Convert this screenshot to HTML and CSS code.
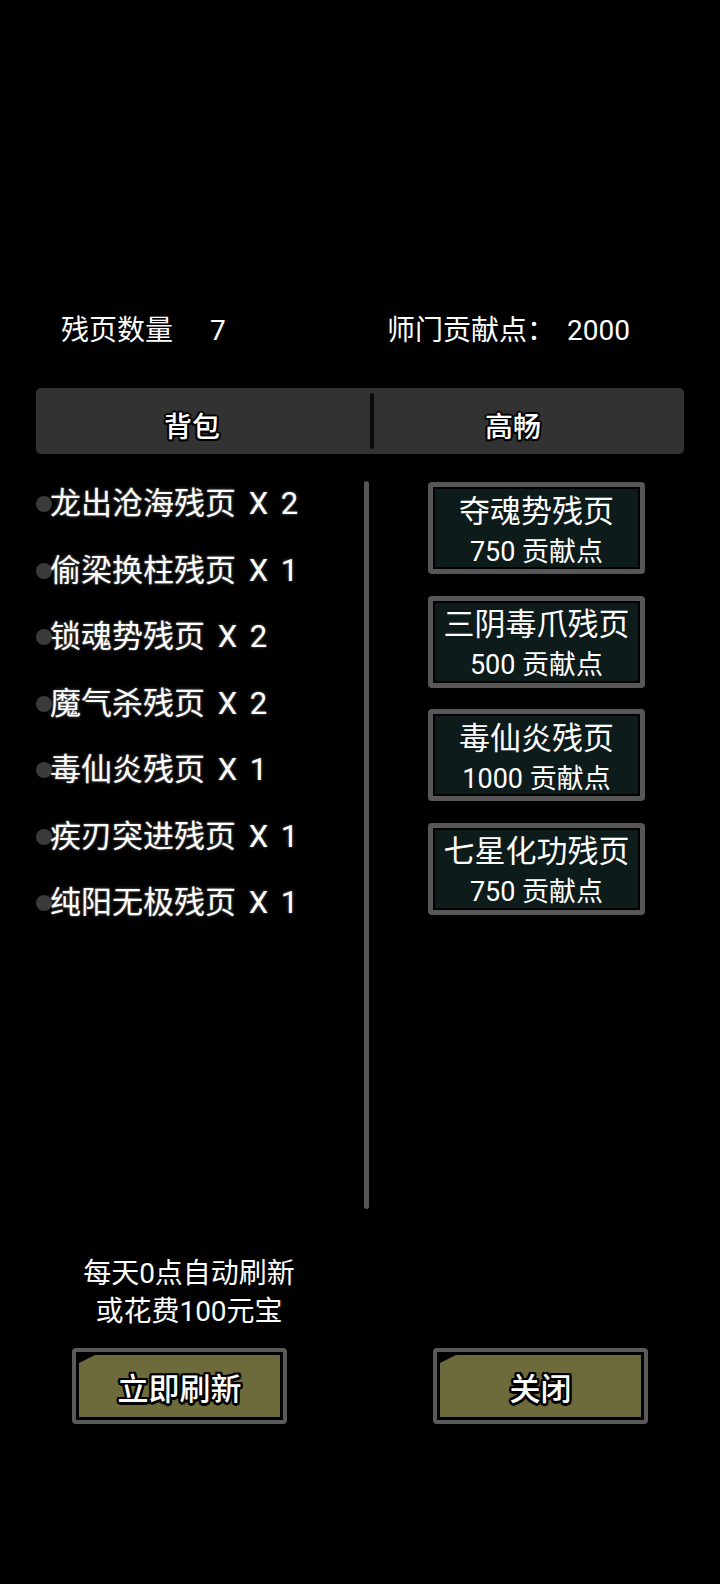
FILE: index.html
```html
<!DOCTYPE html>
<html lang="zh-CN">
<head>
<meta charset="utf-8">
<title>残页</title>
<link rel="stylesheet" href="styles.css">
</head>
<body>
<div class="screen">
  <div class="header">
    <div class="stat stat-left"><span>残页数量</span><span class="num">7</span></div>
    <div class="stat stat-right"><span>师门贡献点：</span><span class="num">2000</span></div>
  </div>

  <div class="tabs">
    <div class="tab tab-first">背包</div>
    <div class="tab-divider"></div>
    <div class="tab tab-second">高畅</div>
  </div>

  <div class="main">
    <ul class="bag">
      <li class="bag-row"><span class="knob"></span><span class="bag-text">龙出沧海残页 X 2</span></li>
      <li class="bag-row"><span class="knob"></span><span class="bag-text">偷梁换柱残页 X 1</span></li>
      <li class="bag-row"><span class="knob"></span><span class="bag-text">锁魂势残页 X 2</span></li>
      <li class="bag-row"><span class="knob"></span><span class="bag-text">魔气杀残页 X 2</span></li>
      <li class="bag-row"><span class="knob"></span><span class="bag-text">毒仙炎残页 X 1</span></li>
      <li class="bag-row"><span class="knob"></span><span class="bag-text">疾刃突进残页 X 1</span></li>
      <li class="bag-row"><span class="knob"></span><span class="bag-text">纯阳无极残页 X 1</span></li>
    </ul>
    <div class="scrollbar"></div>
    <div class="shop">
      <div class="card"><div class="card-title">夺魂势残页</div><div class="card-price">750 贡献点</div></div>
      <div class="card"><div class="card-title">三阴毒爪残页</div><div class="card-price">500 贡献点</div></div>
      <div class="card"><div class="card-title">毒仙炎残页</div><div class="card-price">1000 贡献点</div></div>
      <div class="card"><div class="card-title">七星化功残页</div><div class="card-price">750 贡献点</div></div>
    </div>
  </div>

  <div class="notice">
    <div>每天0点自动刷新</div>
    <div>或花费100元宝</div>
  </div>

  <div class="buttons">
    <div class="btn"><div class="btn-face">立即刷新</div></div>
    <div class="btn"><div class="btn-face">关闭</div></div>
  </div>
</div>
</body>
</html>
```

FILE: styles.css
```css
html, body {
  margin: 0;
  padding: 0;
  background: #000;
}

body {
  width: 720px;
  height: 1584px;
  overflow: hidden;
  color: #fff;
  font-family: Roboto, "Noto Sans CJK SC", sans-serif;
}

.screen {
  padding-top: 311px;
}

/* header stats */
.header {
  display: flex;
  padding-left: 61px;
  font-size: 28px;
  line-height: 40px;
}

.stat {
  display: flex;
}

.stat-left {
  width: 326px;
  gap: 37px;
}

.stat-right {
  gap: 12px;
}

/* tab bar */
.tabs {
  margin: 37px 0 0 36px;
  width: 648px;
  height: 66px;
  background: #323232;
  border-radius: 5px;
  display: flex;
  align-items: center;
}

.tab {
  box-sizing: border-box;
  text-align: center;
  font-size: 28px;
  font-weight: 500;
  line-height: 52px;
  padding-top: 14px;
  height: 66px;
  text-shadow:
    2px 0 #000, -2px 0 #000, 0 2px #000, 0 -2px #000,
    1.5px 1.5px #000, -1.5px -1.5px #000, 1.5px -1.5px #000, -1.5px 1.5px #000;
}

.tab-first {
  flex: 0 0 334px;
  padding-right: 22px;
}

.tab-second {
  flex: 1 1 0;
  padding-right: 32px;
}

.tab-divider {
  flex: none;
  width: 4px;
  height: 56px;
  background: #0a0a0a;
  border-radius: 2px;
}

/* main area */
.main {
  display: flex;
  align-items: flex-start;
  padding-top: 17px;
}

.bag {
  list-style: none;
  margin: 0;
  padding: 0;
  width: 364px;
  display: flex;
  flex-direction: column;
}

.bag-row {
  display: flex;
  align-items: center;
  height: 66.5px;
}

.knob {
  width: 16px;
  height: 16px;
  border-radius: 50%;
  background: #3a3a3a;
  margin-left: 36px;
  margin-right: -2px;
  flex: none;
}

.bag-text {
  font-size: 31px;
  line-height: 66.5px;
  white-space: nowrap;
  word-spacing: 5px;
  text-shadow: 0 0 2px rgba(200, 200, 200, 0.55), 0 0 5px rgba(140, 140, 140, 0.35);
}

.scrollbar {
  width: 5px;
  height: 728px;
  margin-top: 10px;
  background: #555;
  border-radius: 3px;
  flex: none;
}

.shop {
  margin: 11px 0 0 59px;
  display: flex;
  flex-direction: column;
  gap: 21.5px;
}

.card {
  box-sizing: border-box;
  width: 217px;
  height: 92px;
  border: 5px solid #575757;
  border-radius: 4px;
  background: #0e1b1b;
  box-shadow: inset 0 0 0 2px #000;
  display: flex;
  flex-direction: column;
  align-items: center;
}

.card-title {
  margin-top: 6.5px;
  font-size: 31px;
  line-height: 36px;
  white-space: nowrap;
}

.card-price {
  margin-top: 6px;
  font-size: 27px;
  line-height: 32px;
  white-space: nowrap;
}

/* notice */
.notice {
  margin-top: 46px;
  width: 378px;
  text-align: center;
  font-size: 28px;
  line-height: 38px;
}

/* buttons */
.buttons {
  display: flex;
  gap: 146px;
  margin-top: 17px;
  padding-left: 72px;
}

.btn {
  box-sizing: border-box;
  width: 215px;
  height: 76px;
  border: 4px solid #5a5a5a;
  border-radius: 4px;
  background: #000;
  padding: 3px;
}

.btn-face {
  height: 100%;
  background: #6d6a3b;
  clip-path: polygon(16px 0, 100% 0, 100% 100%, 0 100%, 0 8px);
  display: flex;
  align-items: center;
  justify-content: center;
  padding-top: 0;
  font-size: 31px;
  font-weight: 500;
  text-shadow:
    2.5px 0 #000, -2.5px 0 #000, 0 2.5px #000, 0 -2.5px #000,
    2px 2px #000, -2px -2px #000, 2px -2px #000, -2px 2px #000;
}
```
